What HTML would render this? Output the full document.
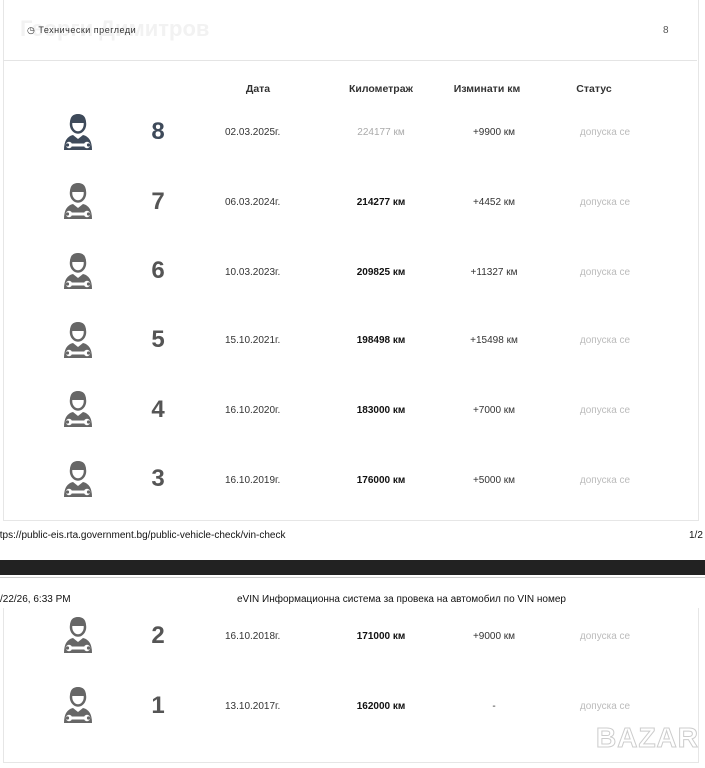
<!DOCTYPE html>
<html><head><meta charset="utf-8"><style>
body{margin:0;width:705px;height:768px;background:#fff;font-family:"Liberation Sans","DejaVu Sans",sans-serif;position:relative;overflow:hidden}
.a{position:absolute;white-space:nowrap}
.d{font-size:10px;color:#333}
.km{font-size:10px;color:#111;font-weight:bold;transform:translateX(-50%)}
.p{font-size:10px;color:#333;transform:translateX(-50%)}
.s{font-size:10px;color:#bbb;transform:translateX(-50%)}
.n{font-size:24px;font-weight:bold;color:#555;transform:translateX(-50%)}
.h{font-size:10.5px;font-weight:bold;color:#333;transform:translateX(-50%)}
svg{position:absolute}
</style></head><body>
<div class="a" style="left:3px;top:0;width:694px;height:520px;border:1px solid #e6e6e6;border-top:none"></div>
<div class="a" style="left:3px;top:60px;width:694px;height:1px;background:#e4e4e4"></div>
<div class="a" style="left:20px;top:16px;font-size:22px;font-weight:bold;color:#f2f2f2">Георги Димитров</div>
<div class="a" style="left:27px;top:25px;font-size:9px;color:#333;letter-spacing:0.5px">◷ Технически прегледи</div>
<div class="a" style="left:663px;top:25px;font-size:10px;color:#555">8</div>
<div class="a h" style="left:258px;top:83px">Дата</div>
<div class="a h" style="left:381px;top:83px">Километраж</div>
<div class="a h" style="left:487px;top:83px">Изминати км</div>
<div class="a h" style="left:594px;top:83px">Статус</div>

<svg width="0" height="0"><defs><g id="ic">
<ellipse cx="17" cy="12" rx="7" ry="8.5" fill="#fff" stroke="currentColor" stroke-width="2.5"/>
<path d="M9 11 Q9 2 17 2 Q25 2 25 11 Z" fill="currentColor"/>
<path d="M3 38 Q3 25 12 23 L17 27 L22 23 Q31 25 31 38 Z" fill="currentColor"/>
<path d="M9 33 H25" stroke="#fff" stroke-width="3"/>
<circle cx="8" cy="33" r="3.2" fill="#fff"/><circle cx="26" cy="33" r="3.2" fill="#fff"/>
<circle cx="6.5" cy="33" r="1.6" fill="currentColor"/><circle cx="27.5" cy="33" r="1.6" fill="currentColor"/>
</g></defs></svg>

<svg style="left:61px;top:112px;color:#3e4a5a" width="34" height="40"><use href="#ic"/></svg>
<svg style="left:61px;top:181px;color:#666" width="34" height="40"><use href="#ic"/></svg>
<svg style="left:61px;top:251px;color:#666" width="34" height="40"><use href="#ic"/></svg>
<svg style="left:61px;top:320px;color:#666" width="34" height="40"><use href="#ic"/></svg>
<svg style="left:61px;top:389px;color:#666" width="34" height="40"><use href="#ic"/></svg>
<svg style="left:61px;top:459px;color:#666" width="34" height="40"><use href="#ic"/></svg>
<svg style="left:61px;top:615px;color:#666" width="34" height="40"><use href="#ic"/></svg>
<svg style="left:61px;top:685px;color:#666" width="34" height="40"><use href="#ic"/></svg>

<div class="a n" style="left:158px;top:118px;color:#3e4a5a">8</div>
<div class="a d" style="left:225px;top:127px">02.03.2025г.</div>
<div class="a km" style="left:381px;top:127px;color:#aaa;font-weight:normal">224177 км</div>
<div class="a p" style="left:494px;top:127px">+9900 км</div>
<div class="a s" style="left:605px;top:127px">допуска се</div>

<div class="a n" style="left:158px;top:188px">7</div>
<div class="a d" style="left:225px;top:197px">06.03.2024г.</div>
<div class="a km" style="left:381px;top:197px">214277 км</div>
<div class="a p" style="left:494px;top:197px">+4452 км</div>
<div class="a s" style="left:605px;top:197px">допуска се</div>

<div class="a n" style="left:158px;top:257px">6</div>
<div class="a d" style="left:225px;top:267px">10.03.2023г.</div>
<div class="a km" style="left:381px;top:267px">209825 км</div>
<div class="a p" style="left:494px;top:267px">+11327 км</div>
<div class="a s" style="left:605px;top:267px">допуска се</div>

<div class="a n" style="left:158px;top:326px">5</div>
<div class="a d" style="left:225px;top:335px">15.10.2021г.</div>
<div class="a km" style="left:381px;top:335px">198498 км</div>
<div class="a p" style="left:494px;top:335px">+15498 км</div>
<div class="a s" style="left:605px;top:335px">допуска се</div>

<div class="a n" style="left:158px;top:396px">4</div>
<div class="a d" style="left:225px;top:405px">16.10.2020г.</div>
<div class="a km" style="left:381px;top:405px">183000 км</div>
<div class="a p" style="left:494px;top:405px">+7000 км</div>
<div class="a s" style="left:605px;top:405px">допуска се</div>

<div class="a n" style="left:158px;top:465px">3</div>
<div class="a d" style="left:225px;top:475px">16.10.2019г.</div>
<div class="a km" style="left:381px;top:475px">176000 км</div>
<div class="a p" style="left:494px;top:475px">+5000 км</div>
<div class="a s" style="left:605px;top:475px">допуска се</div>

<div class="a" style="left:-3px;top:530px;font-size:10px;color:#111">ttps://public-eis.rta.government.bg/public-vehicle-check/vin-check</div>
<div class="a" style="left:689px;top:530px;font-size:10px;color:#111">1/2</div>
<div class="a" style="left:0;top:560px;width:705px;height:15px;background:#222"></div>
<div class="a" style="left:0;top:577px;width:705px;height:1px;background:#ccc"></div>
<div class="a" style="left:0;top:594px;font-size:10px;color:#111">/22/26, 6:33 PM</div>
<div class="a" style="left:237px;top:594px;font-size:10px;color:#111">eVIN Информационна система за провека на автомобил по VIN номер</div>
<div class="a" style="left:3px;top:608px;width:694px;height:154px;border:1px solid #e6e6e6;border-top:none"></div>

<div class="a n" style="left:158px;top:622px">2</div>
<div class="a d" style="left:225px;top:631px">16.10.2018г.</div>
<div class="a km" style="left:381px;top:631px">171000 км</div>
<div class="a p" style="left:494px;top:631px">+9000 км</div>
<div class="a s" style="left:605px;top:631px">допуска се</div>

<div class="a n" style="left:158px;top:692px">1</div>
<div class="a d" style="left:225px;top:701px">13.10.2017г.</div>
<div class="a km" style="left:381px;top:701px">162000 км</div>
<div class="a p" style="left:494px;top:701px">-</div>
<div class="a s" style="left:605px;top:701px">допуска се</div>

<div class="a" style="left:596px;top:722px;font-size:28px;font-weight:bold;color:#fff;-webkit-text-stroke:1px #ccc;letter-spacing:1px">BAZAR</div>
</body></html>
